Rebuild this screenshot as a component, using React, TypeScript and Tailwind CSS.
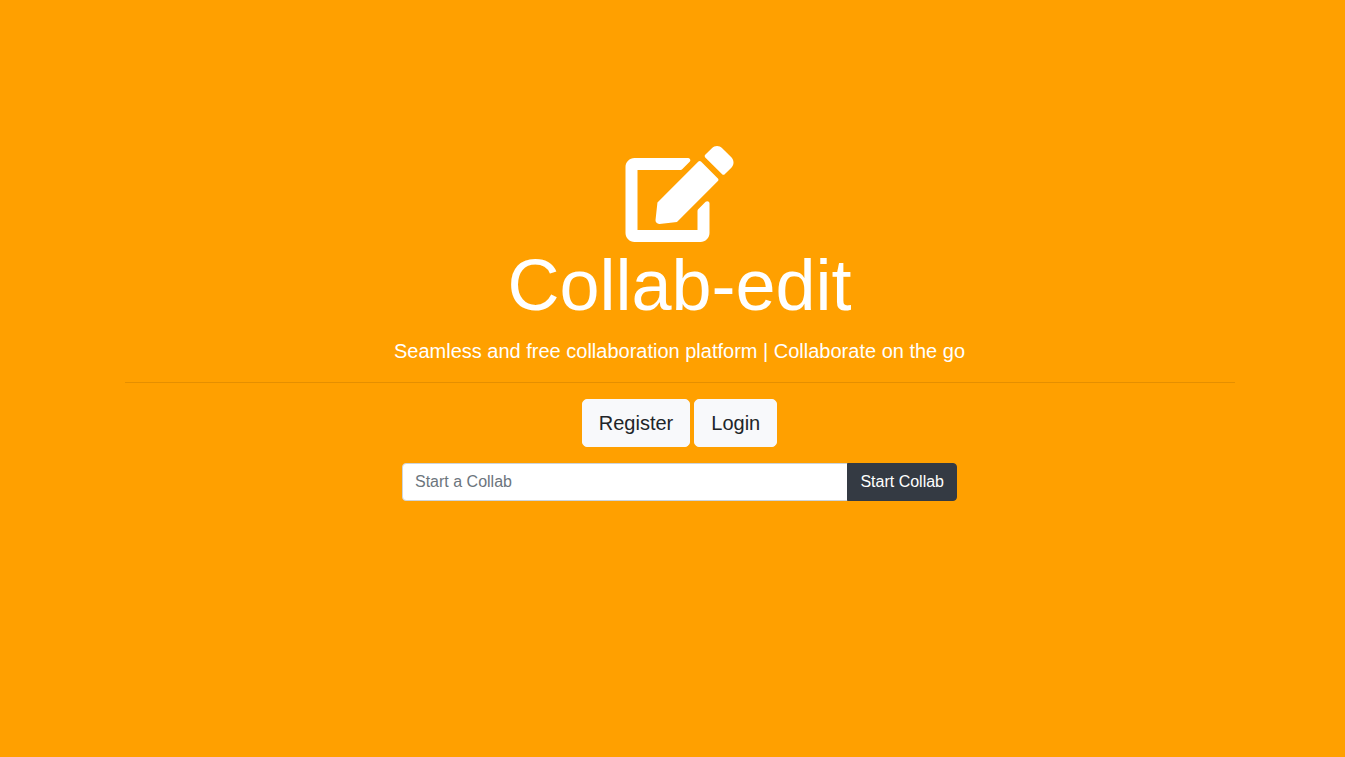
import { FaEdit } from "react-icons/fa";

export default function App() {
  return (
    <div className="min-h-screen bg-[#ffa000] pt-[146px] pl-[14px] font-['Liberation_Sans',Arial,sans-serif] text-white">
      <main className="mx-auto flex max-w-[1110px] flex-col items-center text-center">
        <FaEdit className="h-24 w-[109px]" aria-hidden="true" />
        <h1 className="mb-2 text-[72px] leading-[86px]">Collab-edit</h1>
        <p className="mb-4 text-xl leading-[30px]">
          Seamless and free collaboration platform | Collaborate on the go
        </p>
        <hr className="mb-4 w-full border-t border-black/10" />
        <div className="mb-4 flex gap-1">
          <a href="#register" className="rounded-[5px] border border-[#f8f9fb] bg-[#f8f9fb] px-4 py-2 text-xl leading-[30px] text-[#212529]">
            Register
          </a>
          <a href="#login" className="rounded-[5px] border border-[#f8f9fb] bg-[#f8f9fb] px-4 py-2 text-xl leading-[30px] text-[#212529]">
            Login
          </a>
        </div>
        <form className="flex w-1/2" onSubmit={(event) => event.preventDefault()}>
          <input
            type="text"
            aria-label="Start a Collab"
            placeholder="Start a Collab"
            className="min-w-0 flex-1 rounded-l border border-[#ced4da] bg-white px-3 py-1.5 text-base leading-6 text-[#495057] placeholder:text-[#6c757d] placeholder:opacity-100"
          />
          <button type="submit" className="-ml-px rounded-r border border-[#343a43] bg-[#343a43] px-3 py-1.5 text-base leading-6 text-white">
            Start Collab
          </button>
        </form>
      </main>
    </div>
  );
}
